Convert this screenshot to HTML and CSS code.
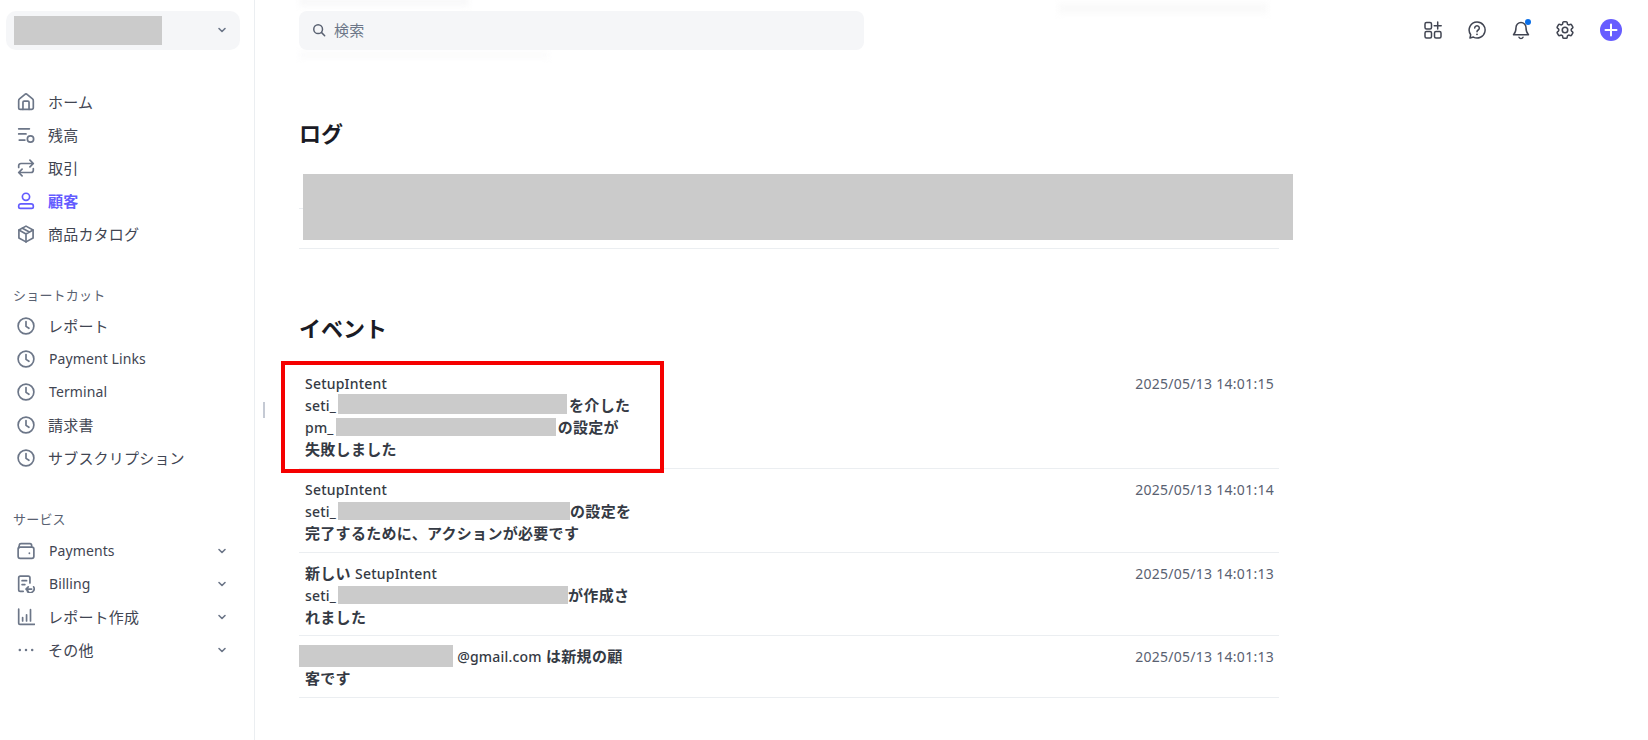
FILE: index.html
```html
<!DOCTYPE html>
<html lang="ja">
<head>
<meta charset="utf-8">
<title>顧客</title>
<link rel="stylesheet" href="styles.css">
</head>
<body>
<div class="app">
  <aside class="sidebar">
    <div class="switcher">
      <span class="switcher-mask"></span>
      <svg class="chev" viewBox="0 0 12 12"><path d="M3 4.5 6 7.5l3-3"/></svg>
    </div>
    <nav class="nav nav-main">
      <a class="row"><svg class="icon" viewBox="0 0 16 16"><path d="M1.5 6.800a2 2 0 0 1 .7-1.500L6.800 1.400a1.800 1.800 0 0 1 2.400 0l4.600 3.900a2 2 0 0 1 .7 1.500V13a1.500 1.500 0 0 1-1.500 1.500H3A1.500 1.500 0 0 1 1.500 13Z"/><path d="M5.300 14.500V8.200a1 1 0 0 1 1-1h3.400a1 1 0 0 1 1 1v6.300"/></svg><span>ホーム</span></a>
      <a class="row"><svg class="icon" viewBox="0 0 16 16"><path d="M1.500 2.500h9.500M1.500 7h6.500M2 12.500h5"/><circle cx="12" cy="11.500" r="2.800"/></svg><span>残高</span></a>
      <a class="row"><svg class="icon" viewBox="0 0 16 16"><path d="M1.500 7.500V6a2 2 0 0 1 2-2h11M11.500 1l3 3-3 3"/><path d="M14.500 8.500V10a2 2 0 0 1-2 2h-11M4.500 9l-3 3 3 3"/></svg><span>取引</span></a>
      <a class="row active"><svg class="icon" viewBox="0 0 16 16"><circle cx="8" cy="4.300" r="3.200"/><path d="M3.500 10.500h9a2 2 0 0 1 2 2v.5a1.500 1.500 0 0 1-1.500 1.500H3A1.500 1.500 0 0 1 1.500 13v-.5a2 2 0 0 1 2-2Z"/></svg><span>顧客</span></a>
      <a class="row"><svg class="icon" viewBox="0 0 16 16"><path d="M8 1 14.300 4.500v7L8 15l-6.300-3.500v-7Z"/><path d="M1.700 4.500 8 8l6.300-3.500M8 8v7M4.800 2.800 11 6.300"/></svg><span>商品カタログ</span></a>
    </nav>
    <div class="nav-label label-short">ショートカット</div>
    <nav class="nav">
      <a class="row"><svg class="icon" viewBox="0 0 16 16"><circle cx="8" cy="8" r="7"/><path d="M8 4v4.300l2.600 1.700"/></svg><span>レポート</span></a>
      <a class="row"><svg class="icon" viewBox="0 0 16 16"><circle cx="8" cy="8" r="7"/><path d="M8 4v4.300l2.600 1.700"/></svg><span class="lat">Payment Links</span></a>
      <a class="row"><svg class="icon" viewBox="0 0 16 16"><circle cx="8" cy="8" r="7"/><path d="M8 4v4.300l2.600 1.700"/></svg><span class="lat">Terminal</span></a>
      <a class="row"><svg class="icon" viewBox="0 0 16 16"><circle cx="8" cy="8" r="7"/><path d="M8 4v4.300l2.600 1.700"/></svg><span>請求書</span></a>
      <a class="row"><svg class="icon" viewBox="0 0 16 16"><circle cx="8" cy="8" r="7"/><path d="M8 4v4.300l2.600 1.700"/></svg><span>サブスクリプション</span></a>
    </nav>
    <div class="nav-label label-serv">サービス</div>
    <nav class="nav">
      <a class="row"><svg class="icon" viewBox="0 0 16 16"><rect x="1" y="4.500" width="14" height="10" rx="1.800"/><path d="M1.500 5.500 2 2.800A1.500 1.500 0 0 1 3.500 1.500h8A1.500 1.500 0 0 1 13 3v1.500"/><circle class="fill" cx="11" cy="10" r=".8"/></svg><span class="lat">Payments</span><svg class="chev" viewBox="0 0 12 12"><path d="M3 4.500 6 7.500l3-3"/></svg></a>
      <a class="row"><svg class="icon" viewBox="0 0 16 16"><path d="M5.500 14.500H3A1.500 1.500 0 0 1 1.500 13V2.500A1.500 1.500 0 0 1 3 1h7a1.500 1.500 0 0 1 1.500 1.500V7"/><path d="M4.500 5h4M4.500 8.500h2.500"/><path d="M8 12.500h5M14.800 10.500a3.500 3.500 0 0 1-5.500 4.200M10 10.500l-2 2 2 2"/></svg><span class="lat">Billing</span><svg class="chev" viewBox="0 0 12 12"><path d="M3 4.500 6 7.500l3-3"/></svg></a>
      <a class="row"><svg class="icon" viewBox="0 0 16 16"><path d="M1.500 1v12.500a1 1 0 0 0 1 1h13"/><path d="M5 8.500v3M8.500 6v5.500M12 1.500v10"/></svg><span>レポート作成</span><svg class="chev" viewBox="0 0 12 12"><path d="M3 4.500 6 7.500l3-3"/></svg></a>
      <a class="row"><svg class="icon" viewBox="0 0 16 16"><circle class="fill" cx="2.500" cy="8" r="1.100"/><circle class="fill" cx="8" cy="8" r="1.100"/><circle class="fill" cx="13.500" cy="8" r="1.100"/></svg><span>その他</span><svg class="chev" viewBox="0 0 12 12"><path d="M3 4.500 6 7.500l3-3"/></svg></a>
    </nav>
    <span class="handle"></span>
  </aside>

  <main class="main">
    <span class="ghost ghost-top"></span>
    <span class="ghost ghost-under"></span>
    <span class="ghost ghost-right"></span>
    <header class="topbar">
      <div class="search">
        <svg class="search-icon" viewBox="0 0 16 16"><circle cx="7" cy="7" r="5"/><path d="M11 11l3.500 3.500"/></svg>
        <span>検索</span>
      </div>
      <div class="tools">
        <svg class="tool" viewBox="0 0 20 20"><rect x="2" y="2.500" width="6.500" height="6.500" rx="1.500"/><rect x="2" y="11.500" width="6.500" height="6.500" rx="1.500"/><rect x="11.500" y="11.500" width="6.500" height="6.500" rx="1.500"/><path d="M14.700 2v7M11.200 5.700h7"/></svg>
        <svg class="tool" viewBox="0 0 20 20"><path d="M10 2a8 8 0 1 1-3.600 15.100L3 18l.7-3.300A8 8 0 0 1 10 2Z"/><path d="M7.700 8a2.300 2.300 0 1 1 3.500 2c-.8.500-1.200 1-1.200 1.800"/><circle class="fill" cx="10" cy="14.300" r=".9"/></svg>
        <span class="bell"><svg class="tool" viewBox="0 0 20 20"><path d="M10 2.500a5 5 0 0 0-5 5c0 4-.7 5.500-2.500 7.300h15C15.700 13 15 11.500 15 7.500a5 5 0 0 0-5-5Z"/><path d="M8 17.200a2.200 2.200 0 0 0 4 0"/></svg><span class="dot"></span></span>
        <svg class="tool gear" viewBox="0 0 24 24"><path d="M9.594 3.940c.09-.542.56-.94 1.110-.94h2.593c.55 0 1.020.398 1.110.94l.213 1.281c.063.374.313.686.645.870.074.04.147.083.22.127.325.196.72.257 1.075.124l1.217-.456a1.125 1.125 0 0 1 1.370.49l1.296 2.247a1.125 1.125 0 0 1-.26 1.431l-1.003.827c-.293.241-.438.613-.43.992a7.723 7.723 0 0 1 0 .255c-.008.378.137.75.43.991l1.004.827c.424.35.534.955.26 1.430l-1.298 2.247a1.125 1.125 0 0 1-1.369.491l-1.217-.456c-.355-.133-.75-.072-1.076.124a6.470 6.470 0 0 1-.22.128c-.331.183-.581.495-.644.869l-.213 1.281c-.09.543-.56.94-1.110.94h-2.594c-.55 0-1.019-.398-1.110-.94l-.213-1.281c-.062-.374-.312-.686-.644-.87a6.520 6.520 0 0 1-.22-.127c-.325-.196-.72-.257-1.076-.124l-1.217.456a1.125 1.125 0 0 1-1.369-.49l-1.297-2.247a1.125 1.125 0 0 1 .26-1.431l1.004-.827c.292-.24.437-.613.43-.991a6.932 6.932 0 0 1 0-.255c.007-.38-.138-.751-.43-.992l-1.004-.827a1.125 1.125 0 0 1-.26-1.430l1.297-2.247a1.125 1.125 0 0 1 1.370-.491l1.216.456c.356.133.751.072 1.076-.124.072-.044.146-.086.22-.128.332-.183.582-.495.644-.869l.214-1.280Z"/><circle cx="12" cy="12" r="3"/></svg>
        <span class="plus"><svg viewBox="0 0 22 22"><path d="M11 5.500v11M5.500 11h11"/></svg></span>
      </div>
    </header>

    <section class="log">
      <h2>ログ</h2>
      <div class="log-table">
        <div class="log-row"></div>
        <div class="log-row"></div>
        <span class="log-mask"></span>
      </div>
    </section>

    <section class="events">
      <h2>イベント</h2>
      <div class="event first">
        <div class="event-text"><span class="med">SetupIntent</span><br><span class="med">seti_</span><span class="mask m-seti1"></span>を介した<br><span class="med">pm_</span><span class="mask m-pm"></span>の設定が<br>失敗しました</div>
        <time>2025/05/13 14:01:15</time>
        <span class="callout"></span>
      </div>
      <div class="event">
        <div class="event-text"><span class="med">SetupIntent</span><br><span class="med">seti_</span><span class="mask m-seti2"></span>の設定を<br>完了するために、アクションが必要です</div>
        <time>2025/05/13 14:01:14</time>
      </div>
      <div class="event tight">
        <div class="event-text">新しい <span class="med">SetupIntent</span><br><span class="med">seti_</span><span class="mask m-seti3"></span>が作成さ<br>れました</div>
        <time>2025/05/13 14:01:13</time>
      </div>
      <div class="event">
        <div class="event-text"><span class="mask m-mail"></span> <span class="med">@gmail.com</span> は新規の顧<br>客です</div>
        <time>2025/05/13 14:01:13</time>
      </div>
    </section>
  </main>
</div>
</body>
</html>
```
FILE: styles.css
```css
* { box-sizing: border-box; }
html, body { margin: 0; height: 100%; overflow: hidden; background: #fff; }
body {
  font-family: "Noto Sans", "Noto Sans CJK JP", sans-serif;
  font-size: 14px;
  color: #353a44;
}
.app { display: flex; height: 740px; }

/* sidebar */
.sidebar {
  position: relative;
  width: 255px;
  flex: none;
  border-right: 1px solid #ebeef1;
  padding: 11px 14px 0 6px;
}
.switcher {
  display: flex;
  align-items: center;
  justify-content: space-between;
  height: 39px;
  background: #f5f6f8;
  border-radius: 10px;
  padding: 4px 12px 5px 8px;
}
.switcher-mask { display: block; width: 148px; height: 29px; background: #cbcbcb; }
.chev { width: 12px; height: 12px; flex: none; margin-left: auto; fill: none; stroke: #6c7688; stroke-width: 1.6; stroke-linecap: round; stroke-linejoin: round; }
.nav-main { margin-top: 35px; }
.row {
  display: flex;
  align-items: center;
  height: 33px;
  padding: 0 12px 0 11px;
  font-size: 15px;
  letter-spacing: .2px;
  color: #414552;
  white-space: nowrap;
}
.row .lat { font-size: 14px; letter-spacing: .1px; margin-left: 1px; }
.row.active { color: #635bff; font-weight: 600; }
.icon {
  width: 18px;
  height: 18px;
  flex: none;
  margin-right: 13px;
  fill: none;
  stroke: #6c7688;
  stroke-width: 1.5;
  stroke-linecap: round;
  stroke-linejoin: round;
}
.row.active .icon { stroke: #635bff; }
.icon .fill { fill: #6c7688; stroke: none; }
.nav-label { font-size: 13px; letter-spacing: .2px; color: #596171; padding-left: 7px; line-height: 18px; }
.label-short { margin-top: 36px; margin-bottom: 5px; }
.label-serv { margin-top: 36px; margin-bottom: 6px; }
.handle { position: absolute; left: 263px; top: 402px; width: 2px; height: 16px; background: #c5cad4; }

/* main */
.main { position: relative; flex: 1; min-width: 0; padding: 0 0 0 44px; }
.ghost { position: absolute; filter: blur(3px); }
.ghost-top { left: 44px; top: -3px; width: 170px; height: 9px; background: #f8f8f9; }
.ghost-under { left: 44px; top: 52px; width: 250px; height: 6px; background: #fafafb; }
.ghost-right { left: 803px; top: 3px; width: 210px; height: 11px; background: #fafafa; }
.topbar { position: relative; display: flex; align-items: center; padding-top: 11px; height: 50px; }
.search {
  display: flex;
  align-items: center;
  width: 565px;
  height: 39px;
  background: #f5f6f8;
  border-radius: 8px;
  padding: 0 0 2px 13px;
  font-size: 15px;
  letter-spacing: .2px;
  color: #6c7688;
}
.search-icon { width: 14px; height: 14px; margin-right: 8px; fill: none; stroke: #596171; stroke-width: 1.7; stroke-linecap: round; }
.tools { display: flex; align-items: center; gap: 24px; margin-left: 559px; padding-bottom: 1px; }
.tool { display: block; width: 20px; height: 20px; fill: none; stroke: #414552; stroke-width: 1.5; stroke-linecap: round; stroke-linejoin: round; }
.tool.gear { width: 22px; height: 22px; margin: -1px -1px; stroke-width: 1.7; }
.tool .fill { fill: #414552; stroke: none; }
.bell { position: relative; display: block; }
.dot { position: absolute; right: 0; top: -1px; width: 6px; height: 6px; border-radius: 50%; background: #0a6fe8; }
.plus { display: block; width: 22px; height: 22px; border-radius: 50%; background: #675dff; margin-left: 1px; }
.plus svg { display: block; width: 22px; height: 22px; fill: none; stroke: #fff; stroke-width: 2; stroke-linecap: round; }

h2 { margin: 0; font-size: 22px; line-height: 30px; font-weight: 700; color: #1a1b25; }
.log { margin-top: 68px; }
.log-table { position: relative; width: 980px; margin-top: 26px; }
.log-row { height: 40px; border-bottom: 1px solid #ebeef1; }
.log-row:first-child { height: 35px; }
.log-mask { position: absolute; left: 4px; top: 0; width: 990px; height: 66px; background: #cbcbcb; }

.events { margin-top: 64px; width: 980px; }
.events h2 { margin-bottom: 20px; }
.event {
  position: relative;
  display: flex;
  justify-content: space-between;
  align-items: flex-start;
  padding: 9px 5px 8px 6px;
  border-bottom: 1px solid #ebeef1;
  line-height: 22px;
}
.event.tight { padding-bottom: 7px; }
.event-text { white-space: nowrap; font-size: 15px; font-weight: 600; color: #353a44; letter-spacing: .3px; }
.med { font-size: 14px; line-height: 14px; font-weight: 500; letter-spacing: .2px; }
.mask { display: inline-block; height: 20px; background: #cbcbcb; vertical-align: top; margin-left: 2px; margin-right: 2px; }
.m-seti1 { width: 229px; }
.m-pm { width: 220px; height: 18px; margin-top: 2px; }
.m-seti2 { width: 232px; height: 18px; margin-top: 2px; margin-right: 0; }
.m-seti3 { width: 230px; height: 18px; margin-top: 2px; margin-right: 0; }
.m-mail { width: 154px; height: 22px; margin-left: -6px; margin-right: 0; }
time { color: #596171; letter-spacing: .27px; white-space: nowrap; margin-top: 1px; }
.callout { position: absolute; left: -18px; top: -2px; width: 383px; height: 112px; border: 4px solid #f50000; pointer-events: none; }
```
